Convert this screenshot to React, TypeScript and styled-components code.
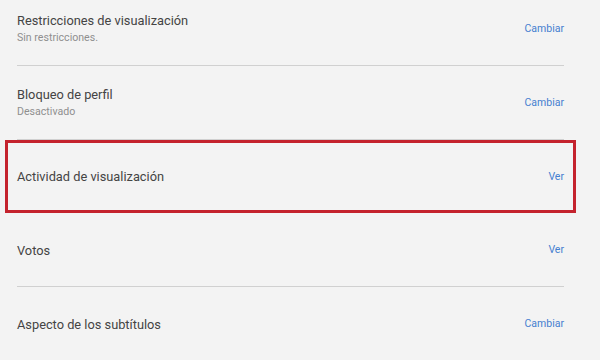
import React from "react";
import styled, { createGlobalStyle } from "styled-components";

const Global = createGlobalStyle`
  html, body { margin: 0; padding: 0; background: #f3f3f3; }
  body { font-family: Roboto, "Liberation Sans", Arial, sans-serif; overflow: hidden; }
`;

const Page = styled.div`
  width: 600px;
  height: 360px;
  overflow: hidden;
  background: #f3f3f3;
`;

const List = styled.div`
  margin: -8px 36px 0 17px;
  display: flex;
  flex-direction: column;
`;

const Row = styled.div<{ $highlight?: boolean }>`
  position: relative;
  display: flex;
  align-items: center;
  justify-content: space-between;
  height: ${(p) => (p.$highlight ? 72 : 73)}px;
  border-bottom: 1px solid #d0d0d0;
  &:last-child { border-bottom: none; }
  ${(p) =>
    p.$highlight &&
    `
    &::after {
      content: "";
      position: absolute;
      left: -12px;
      right: -12px;
      top: 0;
      bottom: -1px;
      border: 3px solid #c4222d;
      pointer-events: none;
    }
  `}
`;

const Info = styled.div`
  display: flex;
  flex-direction: column;
  padding-top: 1px;
`;

const Title = styled.div`
  font-size: 12.8px;
  line-height: 17px;
  color: #444444;
`;

const Sub = styled.div`
  font-size: 10.6px;
  line-height: 18px;
  color: #8f8f8f;
`;

const Action = styled.a`
  font-size: 10.5px;
  color: #4580d0;
  text-decoration: none;
  cursor: pointer;
`;

const rows = [
  { title: "Restricciones de visualización", sub: "Sin restricciones.", action: "Cambiar" },
  { title: "Bloqueo de perfil", sub: "Desactivado", action: "Cambiar" },
  { title: "Actividad de visualización", action: "Ver", highlight: true },
  { title: "Votos", action: "Ver" },
  { title: "Aspecto de los subtítulos", action: "Cambiar" },
];

export default function App() {
  return (
    <Page>
      <Global />
      <List>
        {rows.map((r) => (
          <Row key={r.title} $highlight={r.highlight}>
            <Info>
              <Title>{r.title}</Title>
              {r.sub && <Sub>{r.sub}</Sub>}
            </Info>
            <Action>{r.action}</Action>
          </Row>
        ))}
      </List>
    </Page>
  );
}
